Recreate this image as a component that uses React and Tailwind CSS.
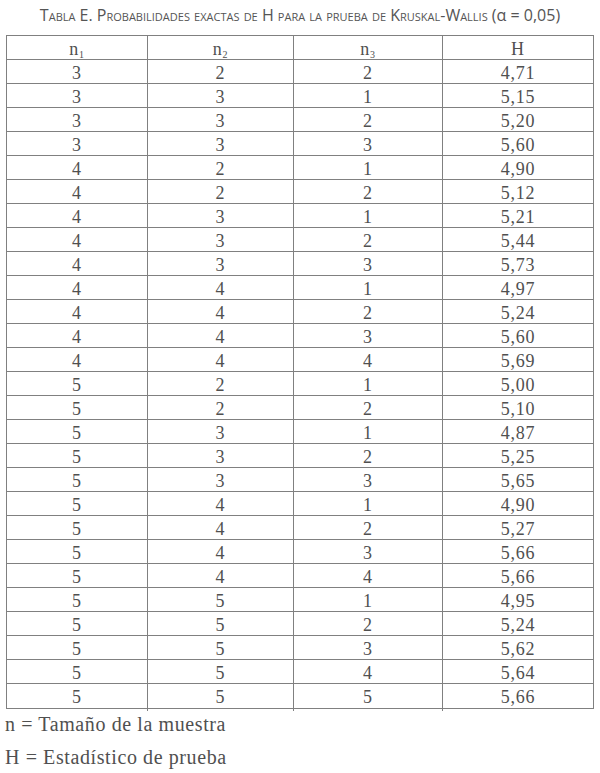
import React from 'react';

const rows = [
  [3, 2, 2, '4,71'],
  [3, 3, 1, '5,15'],
  [3, 3, 2, '5,20'],
  [3, 3, 3, '5,60'],
  [4, 2, 1, '4,90'],
  [4, 2, 2, '5,12'],
  [4, 3, 1, '5,21'],
  [4, 3, 2, '5,44'],
  [4, 3, 3, '5,73'],
  [4, 4, 1, '4,97'],
  [4, 4, 2, '5,24'],
  [4, 4, 3, '5,60'],
  [4, 4, 4, '5,69'],
  [5, 2, 1, '5,00'],
  [5, 2, 2, '5,10'],
  [5, 3, 1, '4,87'],
  [5, 3, 2, '5,25'],
  [5, 3, 3, '5,65'],
  [5, 4, 1, '4,90'],
  [5, 4, 2, '5,27'],
  [5, 4, 3, '5,66'],
  [5, 4, 4, '5,66'],
  [5, 5, 1, '4,95'],
  [5, 5, 2, '5,24'],
  [5, 5, 3, '5,62'],
  [5, 5, 4, '5,64'],
  [5, 5, 5, '5,66'],
];

const serif = "font-['Liberation_Serif',serif]";
const cols = 'grid grid-cols-[141px_146px_149px_150px]';
const cell = 'border-r border-[#808080] last:border-r-0 flex items-center justify-center';

function N({ i }) {
  return (
    <span>
      n<sub className="text-[10px] relative top-[3px] align-baseline">{i}</sub>
    </span>
  );
}

export default function App() {
  return (
    <div className="w-[600px] h-[773px] bg-white text-[#505050] overflow-hidden">
      <h1 className="pt-[3px] h-[35px] text-center text-[16px] font-['Open_Sans',sans-serif] [font-variant:small-caps] text-[#555]">
        Tabla E. Probabilidades exactas de H para la prueba de Kruskal-Wallis (<span className="[font-variant:normal]">α = 0,05</span>)
      </h1>
      <div className={`ml-[6px] w-[588px] border border-[#808080] ${serif} text-[18px] tracking-[0.8px]`}>
        <div className={`${cols} h-[24px] border-b border-[#808080]`}>
          <div className={cell}><N i="1" /></div>
          <div className={cell}><N i="2" /></div>
          <div className={cell}><N i="3" /></div>
          <div className={cell}>H</div>
        </div>
        {rows.map((r, k) => (
          <div
            key={k}
            className={`${cols} h-[24px] border-[#808080] ${k < rows.length - 1 ? 'border-b' : ''}`}
          >
            {r.map((v, j) => (
              <div key={j} className={cell}>{v}</div>
            ))}
          </div>
        ))}
      </div>
      <div className={`${serif} text-[20px] tracking-[0.6px] pl-[5px]`}>
        <p className="h-[31px] leading-[31px]">n = Tamaño de la muestra</p>
        <p className="h-[34px] leading-[34px]">H = Estadístico de prueba</p>
      </div>
    </div>
  );
}
